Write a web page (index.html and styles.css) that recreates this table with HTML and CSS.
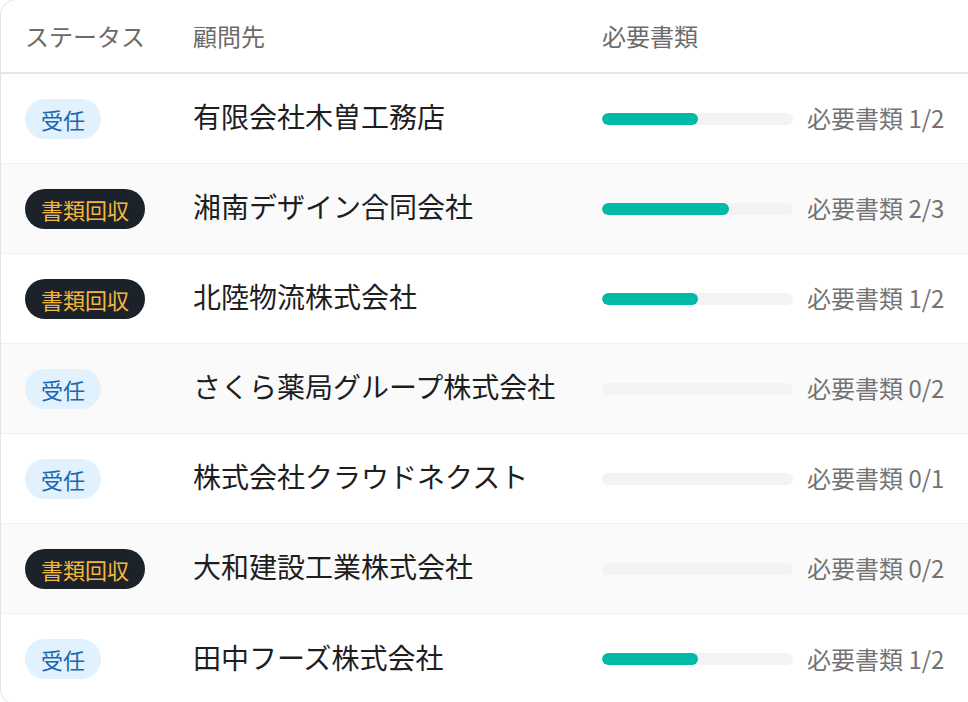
FILE: index.html
```html
<!DOCTYPE html>
<html lang="ja">
<head>
<meta charset="utf-8">
<link rel="stylesheet" href="styles.css">
</head>
<body>
<div class="card">
  <div class="row head">
    <div>ステータス</div>
    <div>顧問先</div>
    <div>必要書類</div>
  </div>
  <div class="row">
    <div><span class="badge accepted">受任</span></div>
    <div class="name">有限会社木曽工務店</div>
    <div class="docs"><div class="bar"><div class="fill" style="width:50%"></div></div><span class="count">必要書類 1/2</span></div>
  </div>
  <div class="row alt">
    <div><span class="badge collect">書類回収</span></div>
    <div class="name">湘南デザイン合同会社</div>
    <div class="docs"><div class="bar"><div class="fill" style="width:66.7%"></div></div><span class="count">必要書類 2/3</span></div>
  </div>
  <div class="row">
    <div><span class="badge collect">書類回収</span></div>
    <div class="name">北陸物流株式会社</div>
    <div class="docs"><div class="bar"><div class="fill" style="width:50%"></div></div><span class="count">必要書類 1/2</span></div>
  </div>
  <div class="row alt">
    <div><span class="badge accepted">受任</span></div>
    <div class="name">さくら薬局グループ株式会社</div>
    <div class="docs"><div class="bar"><div class="fill" style="width:0%"></div></div><span class="count">必要書類 0/2</span></div>
  </div>
  <div class="row">
    <div><span class="badge accepted">受任</span></div>
    <div class="name">株式会社クラウドネクスト</div>
    <div class="docs"><div class="bar"><div class="fill" style="width:0%"></div></div><span class="count">必要書類 0/1</span></div>
  </div>
  <div class="row alt">
    <div><span class="badge collect">書類回収</span></div>
    <div class="name">大和建設工業株式会社</div>
    <div class="docs"><div class="bar"><div class="fill" style="width:0%"></div></div><span class="count">必要書類 0/2</span></div>
  </div>
  <div class="row last">
    <div><span class="badge accepted">受任</span></div>
    <div class="name">田中フーズ株式会社</div>
    <div class="docs"><div class="bar"><div class="fill" style="width:50%"></div></div><span class="count">必要書類 1/2</span></div>
  </div>
</div>
</body>
</html>
```

FILE: styles.css
```css
html, body {
  margin: 0;
  padding: 0;
  background: #ffffff;
  overflow: hidden;
}
body {
  font-family: "Noto Sans CJK JP", "Noto Sans", sans-serif;
  width: 968px;
  height: 702px;
}
.card {
  width: 1010px;
  margin-top: -1px;
  border: 1px solid #e4e4e4;
  border-radius: 16px;
  background: #ffffff;
  overflow: hidden;
}
.row {
  display: grid;
  grid-template-columns: 168px 409px 1fr;
  align-items: center;
  padding-left: 24px;
  height: 90px;
  border-bottom: 1px solid #f0f0f0;
  box-sizing: border-box;
}
.row.head {
  height: 74px;
  border-bottom: 2px solid #e6e6e6;
  font-size: 24px;
  color: #6b6b6b;
  padding-bottom: 2px;
}
.row.alt {
  background: #fafafa;
}
.row.last {
  border-bottom: none;
}
.badge {
  display: inline-flex;
  align-items: center;
  height: 40px;
  padding: 0 16px;
  border-radius: 20px;
  font-size: 22px;
  line-height: 1;
  box-sizing: border-box;
}
.badge.accepted {
  background: #e1f1fd;
  color: #1769b3;
}
.badge.collect {
  background: #1c2229;
  color: #f4b63d;
}
.name {
  font-size: 28px;
  color: #1e1e1e;
  padding-bottom: 5px;
}
.docs {
  display: flex;
  align-items: center;
  gap: 14px;
}
.bar {
  width: 191px;
  height: 12px;
  flex: none;
  border-radius: 6px;
  background: #f3f3f3;
  overflow: hidden;
}
.fill {
  height: 100%;
  border-radius: 6px;
  background: #00b9a6;
}
.count {
  font-size: 24px;
  color: #737373;
  white-space: nowrap;
  padding-bottom: 2px;
}
```
